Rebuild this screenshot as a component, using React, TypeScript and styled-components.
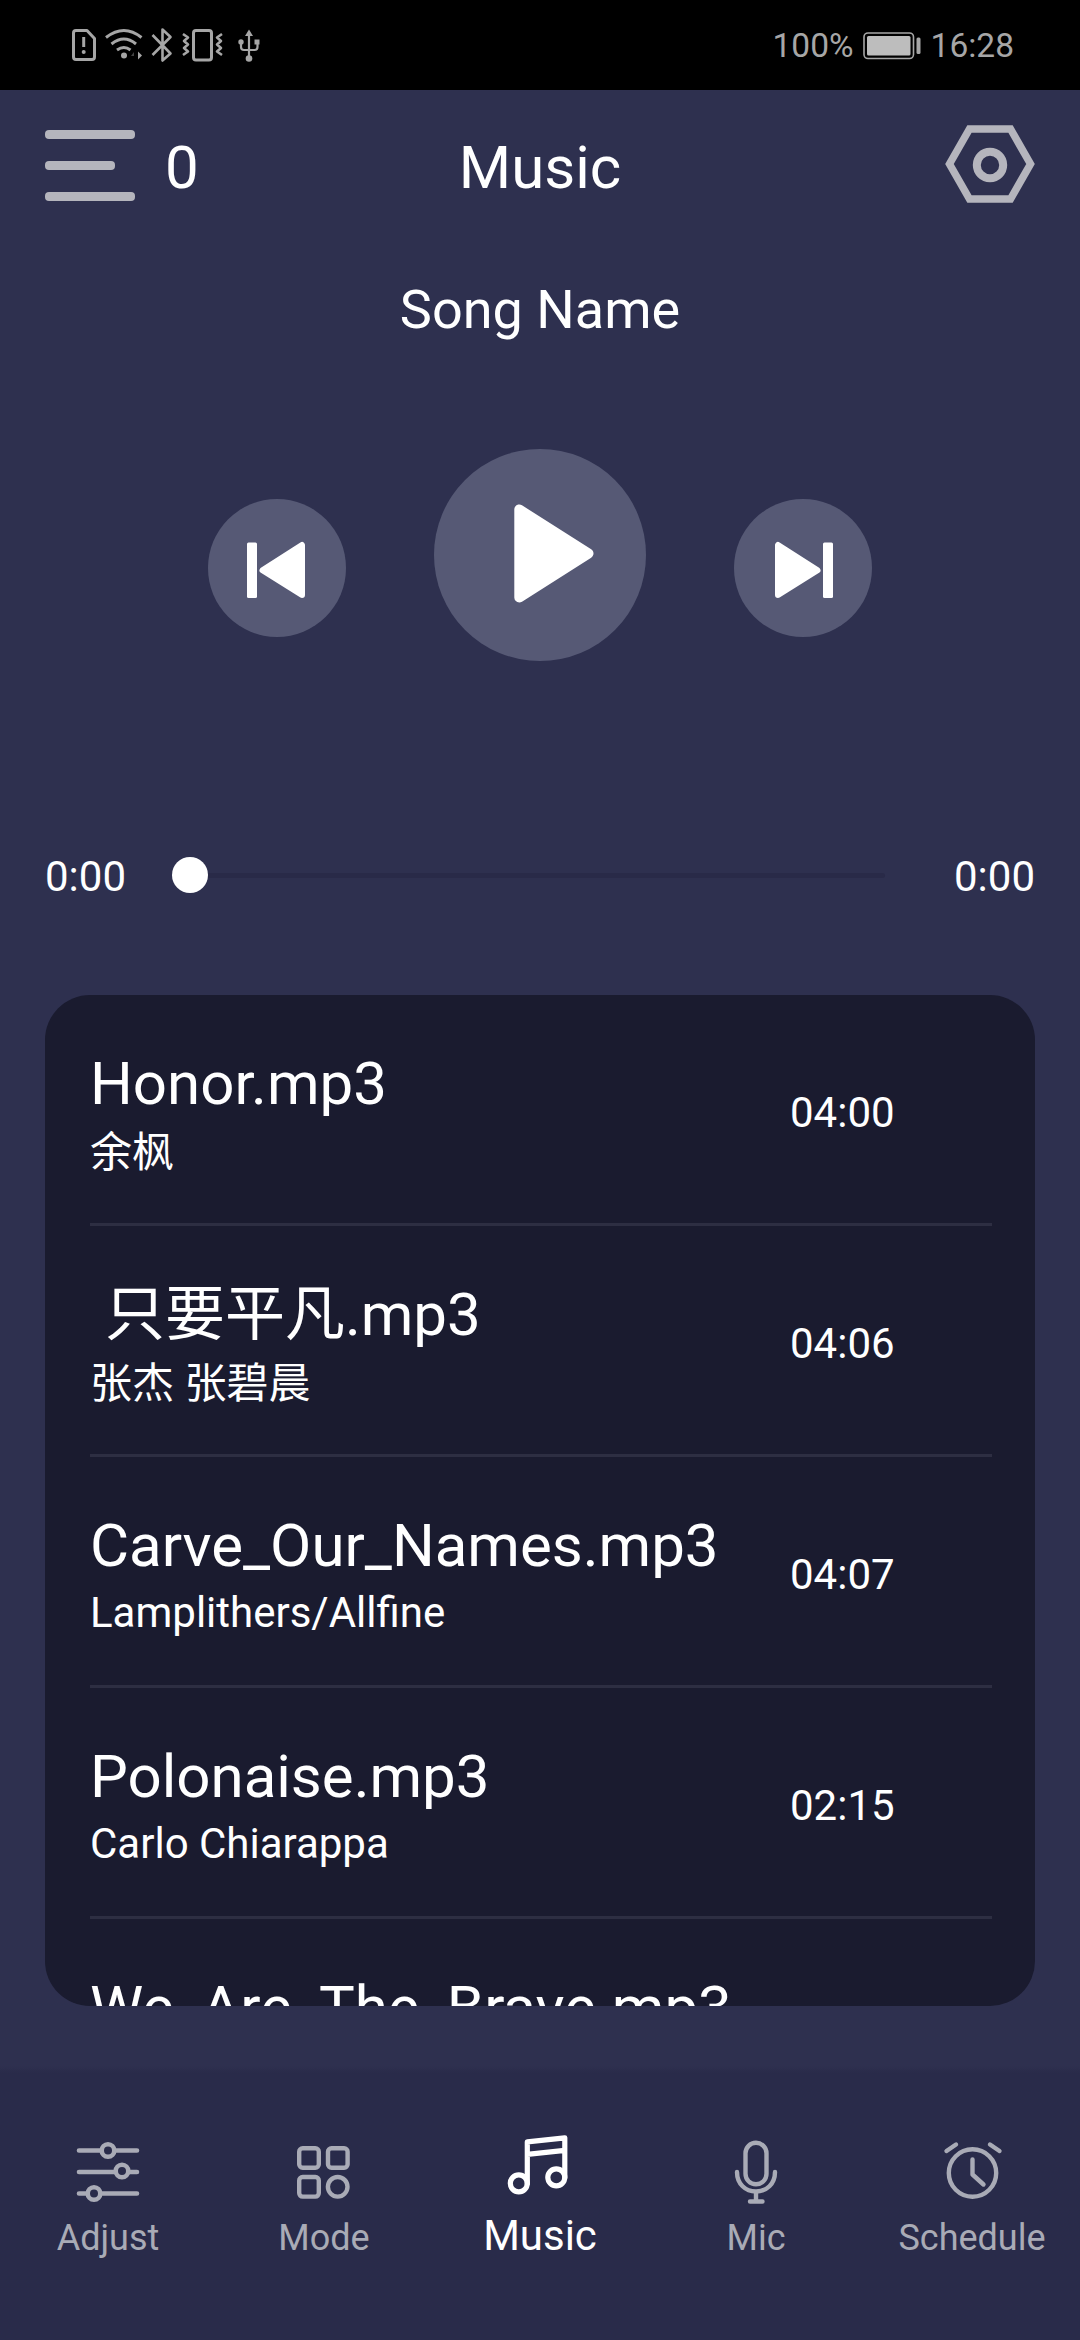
import React from "react";
import styled, { createGlobalStyle, css } from "styled-components";

const GlobalStyle = createGlobalStyle`
  * { box-sizing: border-box; }
  html, body { margin: 0; padding: 0; background: #2e304f; }
  button { border: 0; padding: 0; background: none; font: inherit; color: inherit; }
  svg { display: block; }
`;

const Screen = styled.div`
  width: 1080px;
  height: 2340px;
  display: flex;
  flex-direction: column;
  overflow: hidden;
  color: #fff;
  background: #2e304f;
  font-family: Roboto, "Noto Sans CJK SC", sans-serif;
`;

const StatusBar = styled.header`
  height: 90px;
  flex: none;
  display: flex;
  align-items: center;
  justify-content: space-between;
  padding: 0 66px 0 72px;
  background: #000;
  color: #a6a6a6;
  font-size: 33.5px;
  line-height: 40px;
`;

const StatusIcons = styled.div`
  display: flex;
  align-items: center;
`;

const StatusInfo = styled.div`
  display: flex;
  align-items: center;
  gap: 9px;
  padding-top: 2px;
`;

const TopBar = styled.div`
  height: 150px;
  flex: none;
  display: grid;
  grid-template-columns: 1fr auto 1fr;
  align-items: center;
  padding: 0 45px;
`;

const MenuGroup = styled.div`
  display: flex;
  align-items: center;
  gap: 30px;
`;

const MenuButton = styled.button`
  display: flex;
  flex-direction: column;
  gap: 22px;
`;

const MenuBar = styled.span<{ $short?: boolean }>`
  width: ${(p) => (p.$short ? 70 : 90)}px;
  height: 9px;
  border-radius: 4px;
  background: #b5b5bd;
`;

const Count = styled.span`
  font-size: 60px;
  line-height: 70px;
  padding-top: 5px;
`;

const Title = styled.h1`
  margin: 0;
  font-size: 60px;
  line-height: 70px;
  font-weight: 400;
  padding-top: 5px;
`;

const SettingsButton = styled.button`
  justify-self: end;
  margin-top: -2px;
`;

const SongName = styled.h2`
  margin: 38px 0 0;
  font-size: 54px;
  line-height: 64px;
  font-weight: 400;
  text-align: center;
`;

const Controls = styled.div`
  margin-top: 107px;
  height: 212px;
  flex: none;
  display: flex;
  justify-content: center;
  gap: 88px;
`;

const RoundButton = styled.button<{ $large?: boolean }>`
  width: ${(p) => (p.$large ? 212 : 138)}px;
  height: ${(p) => (p.$large ? 212 : 138)}px;
  margin-top: ${(p) => (p.$large ? 0 : 50)}px;
  border-radius: 50%;
  background: #565975;
`;

const Progress = styled.div`
  margin-top: 184px;
  height: 60px;
  flex: none;
  display: flex;
  align-items: center;
  justify-content: space-between;
  padding: 0 45px;
  font-size: 42px;
  line-height: 50px;
`;

const Elapsed = styled.span`
  padding-top: 3px;
`;

const Slider = styled.div`
  display: flex;
  align-items: center;
  width: 713px;
  margin-right: 24px;
`;

const Thumb = styled.span`
  width: 36px;
  height: 36px;
  border-radius: 50%;
  background: #fff;
`;

const Track = styled.span`
  flex: 1;
  height: 5px;
  border-radius: 0 3px 3px 0;
  background: #292a48;
`;

const Playlist = styled.ul`
  list-style: none;
  margin: 90px 45px 0;
  padding: 0;
  height: 1011px;
  flex: none;
  overflow: hidden;
  border-radius: 45px;
  background: #1a1b2f;
`;

const Row = styled.li`
  height: 231px;
  margin: 0 43px 0 45px;
  display: flex;
  border-bottom: 3px solid #2d2e42;
`;

const TrackText = styled.div`
  width: 700px;
  padding-top: 54px;
  white-space: pre;
`;

const TrackTitle = styled.div`
  font-size: 60px;
  line-height: 70px;
`;

const Artist = styled.div<{ $han?: boolean }>`
  font-size: 42px;
  line-height: 50px;
  margin-top: ${(p) => (p.$han ? 9 : 7)}px;
`;

const Duration = styled.div`
  padding-top: 93px;
  font-size: 42px;
  line-height: 50px;
`;

const NavBar = styled.nav`
  margin-top: auto;
  height: 274px;
  flex: none;
  display: grid;
  grid-template-columns: repeat(5, 1fr);
  background: linear-gradient(#2e304f, #292b4a 7px);
`;

const NavItem = styled.button<{ $active?: boolean }>`
  display: flex;
  flex-direction: column;
  align-items: center;
  color: #a9abb6;
  font-size: 36px;
  line-height: 44px;
  padding-top: 64px;
  svg { height: 76px; }
  span { margin-top: 10px; }
  ${(p) =>
    p.$active &&
    css`
      color: #fff;
      font-size: 42px;
      span { margin-top: 8px; }
    `}
`;

const NavIcon = ({ children, width = 5 }: { children: React.ReactNode; width?: number }) => (
  <svg width="76" height="76" viewBox="0 0 76 76" fill="none" stroke="currentColor" strokeWidth={width} strokeLinecap="round" strokeLinejoin="round">
    {children}
  </svg>
);

const tabs = [
  {
    label: "Adjust",
    icon: (
      <NavIcon width={4.6}>
        <path d="M9 20.500H30.500M45.500 20.500H67M9 42H44M59.500 42H67M9 63.500H16M31.500 63.500H67" />
        <circle cx="38" cy="20.500" r="6.300" />
        <circle cx="52" cy="41" r="6.300" />
        <circle cx="24" cy="63.500" r="6.300" />
      </NavIcon>
    ),
  },
  {
    label: "Mode",
    icon: (
      <NavIcon width={4.4}>
        <rect x="13.200" y="18.200" width="19.600" height="19.600" rx="3.500" />
        <rect x="42" y="18.200" width="19.600" height="19.600" rx="3.500" />
        <rect x="13.200" y="47" width="19.600" height="19.600" rx="3.500" />
        <circle cx="51.700" cy="56.800" r="9.800" />
      </NavIcon>
    ),
  },
  {
    label: "Music",
    active: true,
    icon: (
      <NavIcon width={5.2}>
        <circle cx="16.800" cy="53.300" r="8.500" />
        <circle cx="54.300" cy="47.300" r="8.500" />
        <path d="M25.300 53.300V11.800L62.800 7.800V47.300M25.300 24.300L62.800 20.300" />
      </NavIcon>
    ),
  },
  {
    label: "Mic",
    icon: (
      <NavIcon width={4.4}>
        <rect x="27.500" y="12.800" width="21" height="41.500" rx="10.500" />
        <path d="M19 42C19 54 27.500 61.500 38 61.500S57 54 57 42M38 61.500V71.500M32 71.500H44.500" />
      </NavIcon>
    ),
  },
  {
    label: "Schedule",
    icon: (
      <NavIcon width={4.4}>
        <circle cx="38.500" cy="43" r="23.700" />
        <path d="M38.500 29.500V44.500L49.500 54.500M12.500 21L22 14.500M56 14.500L65.500 21" />
      </NavIcon>
    ),
  },
];

const songs = [
  { title: "Honor.mp3", artist: "余枫", time: "04:00", han: true },
  { title: " 只要平凡.mp3", artist: "张杰 张碧晨", time: "04:06", han: true },
  { title: "Carve_Our_Names.mp3", artist: "Lamplithers/Allfine", time: "04:07" },
  { title: "Polonaise.mp3", artist: "Carlo Chiarappa", time: "02:15" },
  { title: "We_Are_The_Brave.mp3", artist: "", time: "" },
];

const SystemIcons = () => (
  <svg width="190" height="36" viewBox="72 27 190 36" fill="none" stroke="currentColor" strokeWidth="3" strokeLinejoin="round">
    <path d="M76 30.500H87L94.500 38.500V57Q94.500 59.500 92 59.500H76Q73.500 59.500 73.500 57V33Q73.500 30.500 76 30.500Z" />
    <path d="M83.700 37V47" />
    <circle cx="83.700" cy="52" r="2" fill="currentColor" stroke="none" />
    <path d="M106 37.500Q124 23.500 141.500 37.500M111.500 44Q124 34 136 44M117 50Q124 45 130.500 50" />
    <circle cx="124" cy="55.500" r="3" fill="currentColor" stroke="none" />
    <path d="M138 51.500V59.500L142 55.500Z" fill="currentColor" stroke="none" />
    <path d="M134 52L131 56H134Z" fill="currentColor" stroke="none" opacity=".4" />
    <path strokeWidth="2.600" d="M152.500 35L170.500 53.500L162.500 60.500V29.500L170.500 37L152.500 55" />
    <rect x="193.500" y="30.500" width="18" height="29.500" rx="2.500" />
    <path strokeWidth="2.600" d="M183 34L188 37.500L184 41L188 44.500L184 48L188 51.500L183 55M222 34L217 37.500L221 41L217 44.500L221 48L217 51.500L222 55" />
    <path strokeWidth="2.200" d="M249 33V58M241 43V47Q241 50 244 50H254.500Q257.500 50 257.500 47V43" />
    <path d="M249 29.500L253 36H245Z" fill="currentColor" stroke="none" />
    <circle cx="241" cy="42" r="2.700" fill="currentColor" stroke="none" />
    <rect x="254.500" y="39.500" width="5" height="5" fill="currentColor" stroke="none" />
    <circle cx="249" cy="58.500" r="3.300" fill="currentColor" stroke="none" />
  </svg>
);

const BatteryIcon = () => (
  <svg width="59" height="28" viewBox="0 0 59 28" fill="none">
    <rect x="1" y="1" width="49.500" height="25.500" rx="4" stroke="currentColor" strokeWidth="1.600" />
    <rect x="4" y="4" width="43.500" height="19.500" rx="1.500" fill="#bdbdbd" />
    <rect x="53.500" y="5.500" width="4" height="16.500" rx="1.500" fill="currentColor" />
  </svg>
);

const SettingsIcon = () => (
  <svg width="90" height="78" viewBox="0 0 90 78" fill="none" stroke="#b5b5bd">
    <path d="M24.500 4H65.500L85.500 39L65.500 74H24.500L4.500 39Z" strokeWidth="7.500" />
    <circle cx="45" cy="40" r="13.200" strokeWidth="8" />
  </svg>
);

const SkipIcon = ({ flip }: { flip?: boolean }) => (
  <svg width="138" height="138" viewBox="0 0 138 138" fill="#fff" stroke="#fff" strokeLinejoin="round">
    <g transform={flip ? "translate(138 0) scale(-1 1)" : undefined}>
      <rect x="39" y="43.500" width="10" height="55.500" rx="1.500" stroke="none" />
      <path d="M54.500 71.300L94 46V96Z" strokeWidth="6" />
    </g>
  </svg>
);

const PlayIcon = () => (
  <svg width="212" height="212" viewBox="0 0 212 212" fill="#fff" stroke="#fff" strokeWidth="10" strokeLinejoin="round">
    <path d="M85.300 60.500V148.500L154.500 104.500Z" />
  </svg>
);

export default function App() {
  return (
    <Screen>
      <GlobalStyle />
      <StatusBar>
        <StatusIcons>
          <SystemIcons />
        </StatusIcons>
        <StatusInfo>
          <span>100%</span>
          <BatteryIcon />
          <span>16:28</span>
        </StatusInfo>
      </StatusBar>
      <TopBar>
        <MenuGroup>
          <MenuButton aria-label="Menu">
            <MenuBar />
            <MenuBar $short />
            <MenuBar />
          </MenuButton>
          <Count>0</Count>
        </MenuGroup>
        <Title>Music</Title>
        <SettingsButton aria-label="Settings">
          <SettingsIcon />
        </SettingsButton>
      </TopBar>
      <SongName>Song Name</SongName>
      <Controls>
        <RoundButton aria-label="Previous">
          <SkipIcon />
        </RoundButton>
        <RoundButton $large aria-label="Play">
          <PlayIcon />
        </RoundButton>
        <RoundButton aria-label="Next">
          <SkipIcon flip />
        </RoundButton>
      </Controls>
      <Progress>
        <Elapsed>0:00</Elapsed>
        <Slider>
          <Thumb />
          <Track />
        </Slider>
        <Elapsed>0:00</Elapsed>
      </Progress>
      <Playlist>
        {songs.map((s) => (
          <Row key={s.title}>
            <TrackText>
              <TrackTitle>{s.title}</TrackTitle>
              <Artist $han={s.han}>{s.artist}</Artist>
            </TrackText>
            <Duration>{s.time}</Duration>
          </Row>
        ))}
      </Playlist>
      <NavBar>
        {tabs.map((t) => (
          <NavItem key={t.label} $active={t.active}>
            {t.icon}
            <span>{t.label}</span>
          </NavItem>
        ))}
      </NavBar>
    </Screen>
  );
}
